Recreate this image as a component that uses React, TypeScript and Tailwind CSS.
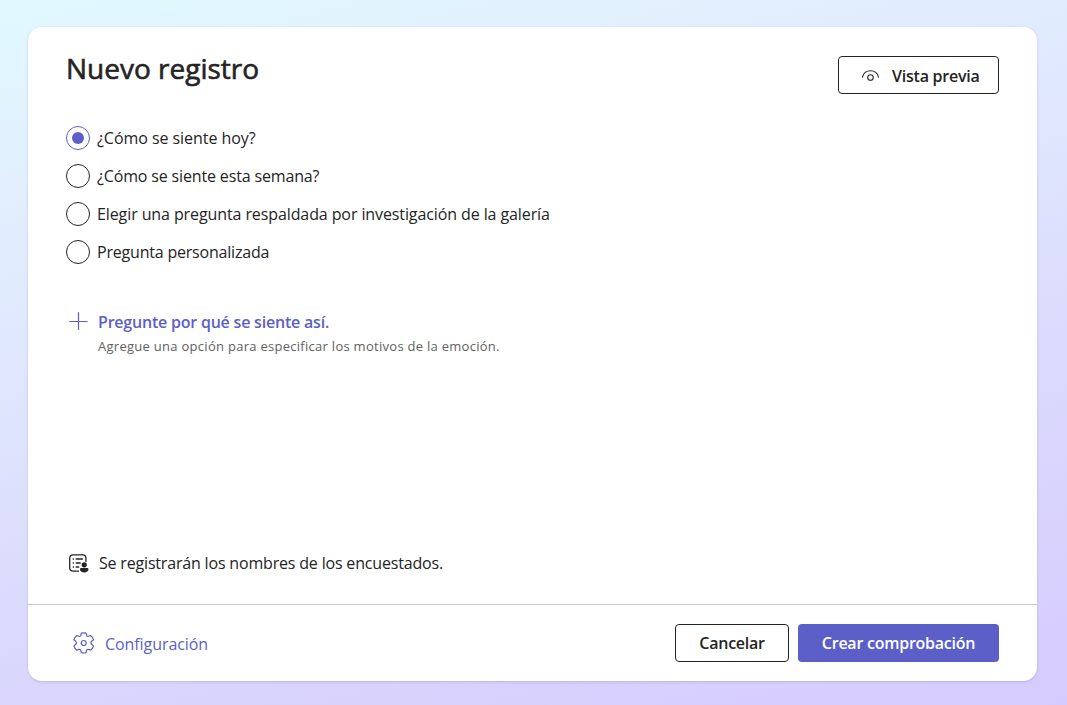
import { useState } from "react";

const options = [
  { label: "¿Cómo se siente hoy?", spacing: "tracking-[-0.05px]" },
  { label: "¿Cómo se siente esta semana?", spacing: "tracking-[-0.15px]" },
  { label: "Elegir una pregunta respaldada por investigación de la galería", spacing: "tracking-[-0.1px]" },
  { label: "Pregunta personalizada", spacing: "tracking-[-0.2px]" },
];

function EyeIcon() {
  return (
    <svg width="20" height="20" viewBox="0 0 20 20" fill="none" stroke="currentColor" strokeWidth="1.1" strokeLinecap="round">
      <path d="M1.500 11.100C2.500 7 5.700 4.700 9.500 4.700s7 2.300 8 6.400" />
      <circle cx="9.500" cy="11.500" r="2.800" />
    </svg>
  );
}

function PlusIcon() {
  return (
    <svg width="20" height="20" viewBox="0 0 20 20" fill="none" stroke="currentColor" strokeWidth="1.200" strokeLinecap="round">
      <path d="M10.500 2.500v17M1.800 11.500h17.400" />
    </svg>
  );
}

function NamesIcon() {
  return (
    <svg width="22" height="22" viewBox="0 0 22 22" fill="none" stroke="currentColor" strokeWidth="1.3" strokeLinecap="round">
      <path d="M10.500 19.200H4.900A3.200 3.200 0 0 1 1.700 16V6a3.200 3.200 0 0 1 3.200-3.200h9.800A3.200 3.200 0 0 1 17.900 6v3.500" />
      <path d="M5.200 7h.3M5.200 11h.3M5.200 15h.3M8.200 7h6.300M8.200 11h4M8.200 15h2.500" />
      <circle cx="16.200" cy="12.800" r="2.600" fill="currentColor" stroke="none" />
      <path d="M13.400 15.900h5.600c.9 0 1.500.6 1.500 1.400 0 2-1.900 3.100-4.300 3.100s-4.300-1.100-4.300-3.100c0-.8.600-1.400 1.500-1.400Z" fill="currentColor" stroke="none" />
    </svg>
  );
}

function GearIcon() {
  return (
    <svg width="22" height="22" viewBox="0 0 22 22" fill="none" stroke="currentColor" strokeWidth="1.2" strokeLinejoin="round">
      <path d="M8.300 1.100Q10.700 .5 13.100 1.100L13.500 3.200Q13.900 4.800 15.500 4.300L17.600 3.500Q19.900 5.300 20.500 7.700L18.700 9.200Q17.200 11 18.700 12.300L20.500 13.900Q19.800 16.500 17.600 18.200L15.500 17.400Q13.900 17 13.500 18.500L13.100 20.700Q10.700 21.300 8.300 20.700L7.900 18.500Q7.500 17 5.900 17.400L3.800 18.200Q1.500 16.400 .9 13.900L2.700 12.300Q4.200 11 2.700 9.300L.9 7.700Q1.600 5.300 3.800 3.500L5.900 4.300Q7.500 4.800 7.900 3.200Z" />
      <circle cx="10.700" cy="11" r="2.500" />
    </svg>
  );
}

export default function App() {
  const [selected, setSelected] = useState(0);
  return (
    <div className="flex h-[705px] w-[1067px] bg-[linear-gradient(166deg,#e0f9fe_0%,#e2effe_20%,#dfe5fd_42%,#dad7fd_70%,#d6cbfe_100%)] pt-[27px] pr-[30px] pb-[24px] pl-7 font-['Open_Sans','Noto_Sans',sans-serif] text-base text-[#242424]">
      <main className="flex w-full flex-col rounded-[14px] bg-white shadow-[0_1px_3px_rgba(60,50,120,0.18)]">
        <header className="flex items-start justify-between pt-[29px] pr-[38px] pl-[38px]">
          <h1 className="-mt-[6px] text-[28px] leading-9 font-normal whitespace-nowrap [-webkit-text-stroke:0.6px_#242424]">Nuevo registro</h1>
          <button className="flex h-[38px] w-[161px] items-center gap-[11px] rounded-[4px] border border-[#242424] pt-px pl-[22px] font-semibold tracking-[-0.23px] whitespace-nowrap">
            <EyeIcon />
            Vista previa
          </button>
        </header>
        <div className="mt-[32px] flex flex-col gap-[14px] pl-[38px]">
          {options.map((o, i) => (
            <button key={o.label} onClick={() => setSelected(i)} className="flex h-6 items-center gap-[7px] text-left">
              <span className={`flex size-6 shrink-0 items-center justify-center rounded-full border ${selected === i ? "border-[#5b5fc7]" : "border-[#242424]"}`}>
                {selected === i && <span className="size-3 rounded-full bg-[#5b5fc7]" />}
              </span>
              <span className={`whitespace-nowrap ${o.spacing}`}>{o.label}</span>
            </button>
          ))}
        </div>
        <section className="mt-[46px] flex gap-[10px] pl-[40px]">
          <span className="text-[#5b5fc7]"><PlusIcon /></span>
          <div className="whitespace-nowrap">
            <div className="leading-6 font-semibold tracking-[-0.21px] text-[#5b5fc7]">Pregunte por qué se siente así.</div>
            <div className="text-[13px] leading-6 tracking-[0.28px] text-[#616161]">Agregue una opción para especificar los motivos de la emoción.</div>
          </div>
        </section>
        <div className="mt-auto flex h-6 items-center gap-[9px] pl-[40px]">
          <NamesIcon />
          <span className="tracking-[-0.18px] whitespace-nowrap">Se registrarán los nombres de los encuestados.</span>
        </div>
        <footer className="mt-[29px] flex h-[77px] items-center justify-between border-t border-[#c7c7c7] pr-[38px] pl-[45px]">
          <button className="flex items-center gap-[10px] text-[#5b5fc7]">
            <GearIcon />
            <span className="pt-[2px] tracking-[-0.07px]">Configuración</span>
          </button>
          <div className="flex gap-[9px] font-semibold tracking-[-0.25px] whitespace-nowrap">
            <button className="h-[38px] w-[114px] rounded-[4px] border border-[#242424]">Cancelar</button>
            <button className="h-[38px] w-[201px] rounded-[4px] bg-[#5b5fc7] text-white">Crear comprobación</button>
          </div>
        </footer>
      </main>
    </div>
  );
}
